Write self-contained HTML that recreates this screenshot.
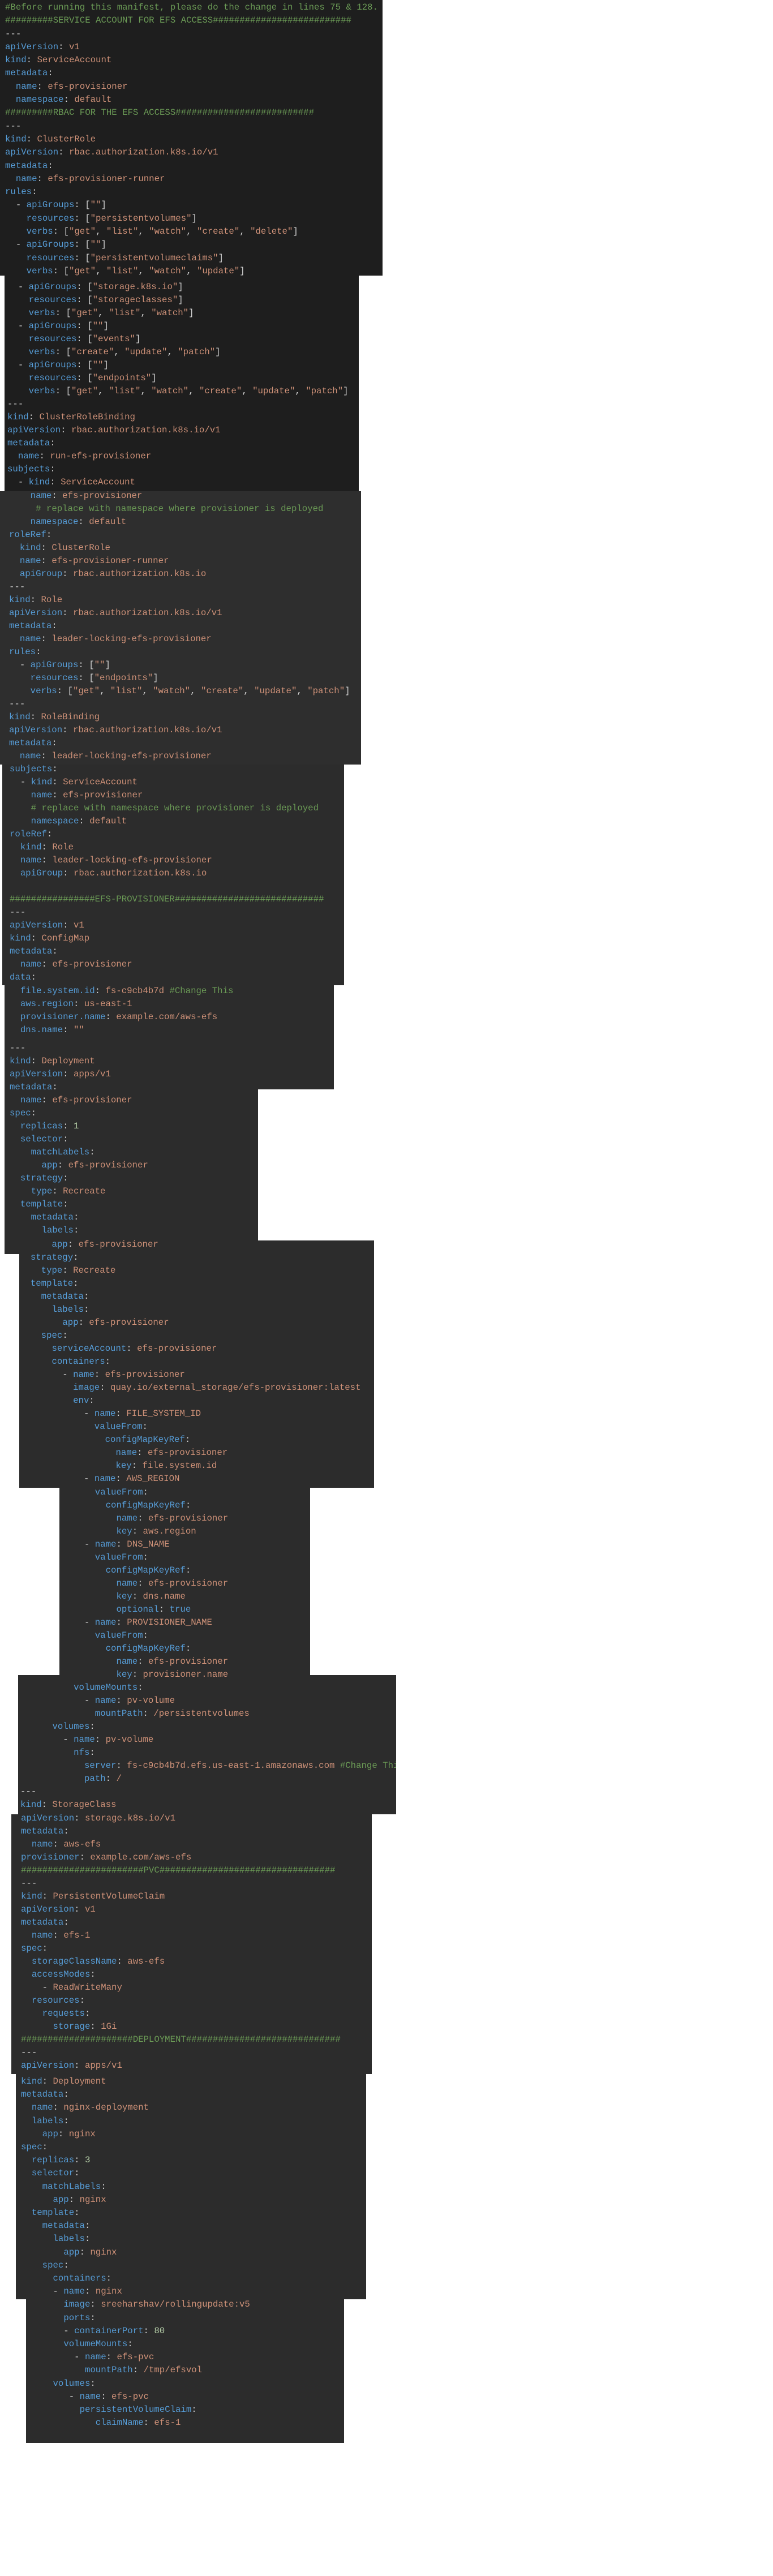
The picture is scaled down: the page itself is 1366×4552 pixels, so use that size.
<!DOCTYPE html>
<html><head><meta charset="utf-8">
<style>
html,body{margin:0;padding:0;background:#fff;}
body{position:relative;width:1366px;height:4552px;overflow:hidden;}
.b{position:absolute;}
.d1{background:#1e1e1e;}
.d2{background:#2c2c2c;}
pre{position:absolute;margin:0;font-family:"Liberation Mono",monospace;font-size:15.7px;line-height:23px;color:#d4d4d4;white-space:pre;z-index:5;}
.k{color:#569cd6}.v{color:#ce9178}.c{color:#6a9955}.n{color:#b5cea8}
</style></head><body>
<div class="b d1" style="left:0;top:0;width:676px;height:487px"></div>
<div class="b d1" style="left:8px;top:487px;width:626px;height:381px"></div>
<div class="b d2" style="left:0;top:868px;width:638px;height:483px;background:#2e2e2e"></div>
<div class="b d2" style="left:4px;top:1351px;width:604px;height:390px"></div>
<div class="b d2" style="left:8px;top:1741px;width:582px;height:184px"></div>
<div class="b d2" style="left:8px;top:1925px;width:448px;height:291px"></div>
<div class="b d2" style="left:34px;top:2192px;width:627px;height:437px"></div>
<div class="b d2" style="left:105px;top:2629px;width:443px;height:331px"></div>
<div class="b d2" style="left:32px;top:2960px;width:668px;height:246px"></div>
<div class="b d2" style="left:20px;top:3206px;width:637px;height:459px"></div>
<div class="b d2" style="left:28px;top:3665px;width:619px;height:398px"></div>
<div class="b d2" style="left:46px;top:4063px;width:562px;height:254px"></div>

<pre style="left:9px;top:2px;line-height:23.3px"><span class="c">#Before running this manifest, please do the change in lines 75 &amp; 128.</span>
<span class="c">#########SERVICE ACCOUNT FOR EFS ACCESS##########################</span>
---
<span class="k">apiVersion</span>: <span class="v">v1</span>
<span class="k">kind</span>: <span class="v">ServiceAccount</span>
<span class="k">metadata</span>:
  <span class="k">name</span>: <span class="v">efs-provisioner</span>
  <span class="k">namespace</span>: <span class="v">default</span>
<span class="c">#########RBAC FOR THE EFS ACCESS##########################</span>
---
<span class="k">kind</span>: <span class="v">ClusterRole</span>
<span class="k">apiVersion</span>: <span class="v">rbac.authorization.k8s.io/v1</span>
<span class="k">metadata</span>:
  <span class="k">name</span>: <span class="v">efs-provisioner-runner</span>
<span class="k">rules</span>:
  - <span class="k">apiGroups</span>: [<span class="v">""</span>]
    <span class="k">resources</span>: [<span class="v">"persistentvolumes"</span>]
    <span class="k">verbs</span>: [<span class="v">"get"</span>, <span class="v">"list"</span>, <span class="v">"watch"</span>, <span class="v">"create"</span>, <span class="v">"delete"</span>]
  - <span class="k">apiGroups</span>: [<span class="v">""</span>]
    <span class="k">resources</span>: [<span class="v">"persistentvolumeclaims"</span>]
    <span class="k">verbs</span>: [<span class="v">"get"</span>, <span class="v">"list"</span>, <span class="v">"watch"</span>, <span class="v">"update"</span>]</pre>

<pre style="left:13px;top:496px">  - <span class="k">apiGroups</span>: [<span class="v">"storage.k8s.io"</span>]
    <span class="k">resources</span>: [<span class="v">"storageclasses"</span>]
    <span class="k">verbs</span>: [<span class="v">"get"</span>, <span class="v">"list"</span>, <span class="v">"watch"</span>]
  - <span class="k">apiGroups</span>: [<span class="v">""</span>]
    <span class="k">resources</span>: [<span class="v">"events"</span>]
    <span class="k">verbs</span>: [<span class="v">"create"</span>, <span class="v">"update"</span>, <span class="v">"patch"</span>]
  - <span class="k">apiGroups</span>: [<span class="v">""</span>]
    <span class="k">resources</span>: [<span class="v">"endpoints"</span>]
    <span class="k">verbs</span>: [<span class="v">"get"</span>, <span class="v">"list"</span>, <span class="v">"watch"</span>, <span class="v">"create"</span>, <span class="v">"update"</span>, <span class="v">"patch"</span>]
---
<span class="k">kind</span>: <span class="v">ClusterRoleBinding</span>
<span class="k">apiVersion</span>: <span class="v">rbac.authorization.k8s.io/v1</span>
<span class="k">metadata</span>:
  <span class="k">name</span>: <span class="v">run-efs-provisioner</span>
<span class="k">subjects</span>:
  - <span class="k">kind</span>: <span class="v">ServiceAccount</span></pre>

<pre style="left:16px;top:865px">    <span class="k">name</span>: <span class="v">efs-provisioner</span>
     <span class="c"># replace with namespace where provisioner is deployed</span>
    <span class="k">namespace</span>: <span class="v">default</span>
<span class="k">roleRef</span>:
  <span class="k">kind</span>: <span class="v">ClusterRole</span>
  <span class="k">name</span>: <span class="v">efs-provisioner-runner</span>
  <span class="k">apiGroup</span>: <span class="v">rbac.authorization.k8s.io</span>
---
<span class="k">kind</span>: <span class="v">Role</span>
<span class="k">apiVersion</span>: <span class="v">rbac.authorization.k8s.io/v1</span>
<span class="k">metadata</span>:
  <span class="k">name</span>: <span class="v">leader-locking-efs-provisioner</span>
<span class="k">rules</span>:
  - <span class="k">apiGroups</span>: [<span class="v">""</span>]
    <span class="k">resources</span>: [<span class="v">"endpoints"</span>]
    <span class="k">verbs</span>: [<span class="v">"get"</span>, <span class="v">"list"</span>, <span class="v">"watch"</span>, <span class="v">"create"</span>, <span class="v">"update"</span>, <span class="v">"patch"</span>]
---
<span class="k">kind</span>: <span class="v">RoleBinding</span>
<span class="k">apiVersion</span>: <span class="v">rbac.authorization.k8s.io/v1</span>
<span class="k">metadata</span>:
  <span class="k">name</span>: <span class="v">leader-locking-efs-provisioner</span></pre>

<pre style="left:17px;top:1348px"><span class="k">subjects</span>:
  - <span class="k">kind</span>: <span class="v">ServiceAccount</span>
    <span class="k">name</span>: <span class="v">efs-provisioner</span>
    <span class="c"># replace with namespace where provisioner is deployed</span>
    <span class="k">namespace</span>: <span class="v">default</span>
<span class="k">roleRef</span>:
  <span class="k">kind</span>: <span class="v">Role</span>
  <span class="k">name</span>: <span class="v">leader-locking-efs-provisioner</span>
  <span class="k">apiGroup</span>: <span class="v">rbac.authorization.k8s.io</span>

<span class="c">################EFS-PROVISIONER############################</span>
---
<span class="k">apiVersion</span>: <span class="v">v1</span>
<span class="k">kind</span>: <span class="v">ConfigMap</span>
<span class="k">metadata</span>:
  <span class="k">name</span>: <span class="v">efs-provisioner</span>
<span class="k">data</span>:</pre>

<pre style="left:17px;top:1740px">  <span class="k">file.system.id</span>: <span class="v">fs-c9cb4b7d</span> <span class="c">#Change This</span>
  <span class="k">aws.region</span>: <span class="v">us-east-1</span>
  <span class="k">provisioner.name</span>: <span class="v">example.com/aws-efs</span>
  <span class="k">dns.name</span>: <span class="v">""</span></pre>

<pre style="left:17px;top:1841px">---
<span class="k">kind</span>: <span class="v">Deployment</span>
<span class="k">apiVersion</span>: <span class="v">apps/v1</span>
<span class="k">metadata</span>:
  <span class="k">name</span>: <span class="v">efs-provisioner</span>
<span class="k">spec</span>:
  <span class="k">replicas</span>: <span class="n">1</span>
  <span class="k">selector</span>:
    <span class="k">matchLabels</span>:
      <span class="k">app</span>: <span class="v">efs-provisioner</span>
  <span class="k">strategy</span>:
    <span class="k">type</span>: <span class="v">Recreate</span>
  <span class="k">template</span>:
    <span class="k">metadata</span>:
      <span class="k">labels</span>:</pre>

<pre style="left:35px;top:2188px">      <span class="k">app</span>: <span class="v">efs-provisioner</span>
  <span class="k">strategy</span>:
    <span class="k">type</span>: <span class="v">Recreate</span>
  <span class="k">template</span>:
    <span class="k">metadata</span>:
      <span class="k">labels</span>:
        <span class="k">app</span>: <span class="v">efs-provisioner</span>
    <span class="k">spec</span>:
      <span class="k">serviceAccount</span>: <span class="v">efs-provisioner</span>
      <span class="k">containers</span>:
        - <span class="k">name</span>: <span class="v">efs-provisioner</span>
          <span class="k">image</span>: <span class="v">quay.io/external_storage/efs-provisioner:latest</span>
          <span class="k">env</span>:
            - <span class="k">name</span>: <span class="v">FILE_SYSTEM_ID</span>
              <span class="k">valueFrom</span>:
                <span class="k">configMapKeyRef</span>:
                  <span class="k">name</span>: <span class="v">efs-provisioner</span>
                  <span class="k">key</span>: <span class="v">file.system.id</span>
            - <span class="k">name</span>: <span class="v">AWS_REGION</span></pre>

<pre style="left:36px;top:2626px;width:664px;overflow:hidden">              <span class="k">valueFrom</span>:
                <span class="k">configMapKeyRef</span>:
                  <span class="k">name</span>: <span class="v">efs-provisioner</span>
                  <span class="k">key</span>: <span class="v">aws.region</span>
            - <span class="k">name</span>: <span class="v">DNS_NAME</span>
              <span class="k">valueFrom</span>:
                <span class="k">configMapKeyRef</span>:
                  <span class="k">name</span>: <span class="v">efs-provisioner</span>
                  <span class="k">key</span>: <span class="v">dns.name</span>
                  <span class="k">optional</span>: <span class="k">true</span>
            - <span class="k">name</span>: <span class="v">PROVISIONER_NAME</span>
              <span class="k">valueFrom</span>:
                <span class="k">configMapKeyRef</span>:
                  <span class="k">name</span>: <span class="v">efs-provisioner</span>
                  <span class="k">key</span>: <span class="v">provisioner.name</span>
          <span class="k">volumeMounts</span>:
            - <span class="k">name</span>: <span class="v">pv-volume</span>
              <span class="k">mountPath</span>: <span class="v">/persistentvolumes</span>
      <span class="k">volumes</span>:
        - <span class="k">name</span>: <span class="v">pv-volume</span>
          <span class="k">nfs</span>:
            <span class="k">server</span>: <span class="v">fs-c9cb4b7d.efs.us-east-1.amazonaws.com</span> <span class="c">#Change This</span>
            <span class="k">path</span>: <span class="v">/</span>
---
<span class="k">kind</span>: <span class="v">StorageClass</span></pre>

<pre style="left:37px;top:3202px"><span class="k">apiVersion</span>: <span class="v">storage.k8s.io/v1</span>
<span class="k">metadata</span>:
  <span class="k">name</span>: <span class="v">aws-efs</span>
<span class="k">provisioner</span>: <span class="v">example.com/aws-efs</span>
<span class="c">#######################PVC#################################</span>
---
<span class="k">kind</span>: <span class="v">PersistentVolumeClaim</span>
<span class="k">apiVersion</span>: <span class="v">v1</span>
<span class="k">metadata</span>:
  <span class="k">name</span>: <span class="v">efs-1</span>
<span class="k">spec</span>:
  <span class="k">storageClassName</span>: <span class="v">aws-efs</span>
  <span class="k">accessModes</span>:
    - <span class="v">ReadWriteMany</span>
  <span class="k">resources</span>:
    <span class="k">requests</span>:
      <span class="k">storage</span>: <span class="v">1Gi</span>
<span class="c">#####################DEPLOYMENT#############################</span>
---
<span class="k">apiVersion</span>: <span class="v">apps/v1</span></pre>

<pre style="left:37px;top:3667px;line-height:23.2px"><span class="k">kind</span>: <span class="v">Deployment</span>
<span class="k">metadata</span>:
  <span class="k">name</span>: <span class="v">nginx-deployment</span>
  <span class="k">labels</span>:
    <span class="k">app</span>: <span class="v">nginx</span>
<span class="k">spec</span>:
  <span class="k">replicas</span>: <span class="n">3</span>
  <span class="k">selector</span>:
    <span class="k">matchLabels</span>:
      <span class="k">app</span>: <span class="v">nginx</span>
  <span class="k">template</span>:
    <span class="k">metadata</span>:
      <span class="k">labels</span>:
        <span class="k">app</span>: <span class="v">nginx</span>
    <span class="k">spec</span>:
      <span class="k">containers</span>:
      - <span class="k">name</span>: <span class="v">nginx</span>
        <span class="k">image</span>: <span class="v">sreeharshav/rollingupdate:v5</span>
        <span class="k">ports</span>:
        - <span class="k">containerPort</span>: <span class="n">80</span>
        <span class="k">volumeMounts</span>:
          - <span class="k">name</span>: <span class="v">efs-pvc</span>
            <span class="k">mountPath</span>: <span class="v">/tmp/efsvol</span>
      <span class="k">volumes</span>:
         - <span class="k">name</span>: <span class="v">efs-pvc</span>
           <span class="k">persistentVolumeClaim</span>:
              <span class="k">claimName</span>: <span class="v">efs-1</span></pre>
</body></html>
